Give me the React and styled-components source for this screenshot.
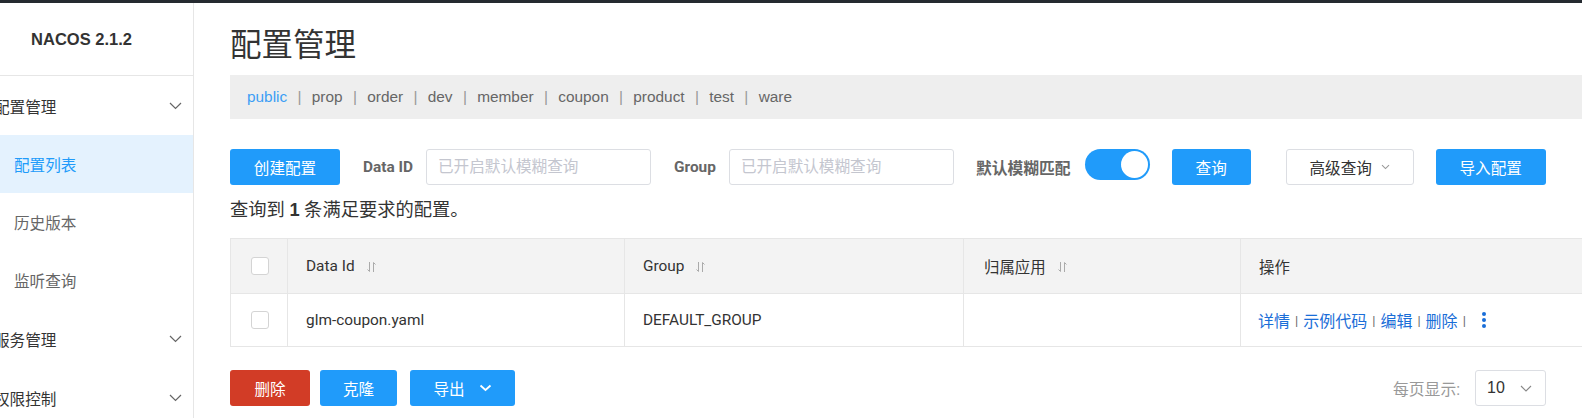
import styled, { createGlobalStyle } from "styled-components";

const GlobalStyle = createGlobalStyle`
  html, body {
    margin: 0;
    padding: 0;
    width: 1582px;
    height: 418px;
    overflow: hidden;
    background: #fff;
  }
  body {
    font-family: Roboto, "Noto Sans CJK SC", "Liberation Sans", sans-serif;
    font-size: 15.4px;
    color: #333;
  }
  * { box-sizing: border-box; }
`;

const BLUE = "#209bfa";

export default function App() {
  const namespaces = ["public", "prop", "order", "dev", "member", "coupon", "product", "test", "ware"];
  return (
    <>
      <GlobalStyle />
      <TopBar />
      <Layout>
        <Sidebar>
          <SideInner>
            <Brand>NACOS 2.1.2</Brand>
            <MenuHead>
              配置管理
              <Chevron />
            </MenuHead>
            <MenuItem $active>配置列表</MenuItem>
            <MenuItem>历史版本</MenuItem>
            <MenuItem>监听查询</MenuItem>
            <MenuHead>
              服务管理
              <Chevron />
            </MenuHead>
            <MenuHead>
              权限控制
              <Chevron />
            </MenuHead>
          </SideInner>
        </Sidebar>

        <Main>
          <Title>配置管理</Title>
          <NamespaceBar>
            {namespaces.map((ns, i) => (
              <span key={ns}>
                {i > 0 && <Sep>|</Sep>}
                <Ns $active={i === 0}>{ns}</Ns>
              </span>
            ))}
          </NamespaceBar>

          <Toolbar>
            <Button $w={110}>创建配置</Button>
            <Label $ml={23}>Data ID</Label>
            <Input $ml={13} placeholder="已开启默认模糊查询" />
            <Label $ml={23}>Group</Label>
            <Input $ml={13} placeholder="已开启默认模糊查询" />
            <Label $ml={22} $size={15.8}>默认模糊匹配</Label>
            <Toggle>
              <Knob />
            </Toggle>
            <Button $w={79} $ml={22}>查询</Button>
            <GhostButton>
              高级查询
              <svg width="9" height="6" viewBox="0 0 9 6">
                <path d="M1 1.2 L4.5 4.6 L8 1.2" fill="none" stroke="#999" strokeWidth="1.1" />
              </svg>
            </GhostButton>
            <Button $w={110} $ml={22}>导入配置</Button>
          </Toolbar>

          <Summary>
            查询到 <b>1</b> 条满足要求的配置。
          </Summary>

          <Table>
            <HeadRow>
              <Cell $w={57} $center>
                <Check />
              </Cell>
              <Cell $w={337}>
                Data Id <SortIcon />
              </Cell>
              <Cell $w={339}>
                Group <SortIcon />
              </Cell>
              <Cell $w={277} $pl={20}>
                归属应用 <SortIcon />
              </Cell>
              <Cell $w={420} $last>
                操作
              </Cell>
            </HeadRow>
            <BodyRow>
              <Cell $w={57} $center>
                <Check />
              </Cell>
              <Cell $w={337}>glm-coupon.yaml</Cell>
              <Cell $w={339}>DEFAULT_GROUP</Cell>
              <Cell $w={277} />
              <Cell $w={420} $last $pl={17}>
                <Actions>
                  <a>详情</a>
                  <ActSep>|</ActSep>
                  <a>示例代码</a>
                  <ActSep>|</ActSep>
                  <a>编辑</a>
                  <ActSep>|</ActSep>
                  <a>删除</a>
                  <ActSep>|</ActSep>
                  <More>
                    <svg width="6" height="18" viewBox="0 0 6 18">
                      <circle cx="3" cy="3" r="2" fill="#1a6ed8" />
                      <circle cx="3" cy="9" r="2" fill="#1a6ed8" />
                      <circle cx="3" cy="15" r="2" fill="#1a6ed8" />
                    </svg>
                  </More>
                </Actions>
              </Cell>
            </BodyRow>
          </Table>

          <Footer>
            <ButtonGroup>
              <Button $w={80} $bg="#d23c26">删除</Button>
              <Button $w={77} $ml={10}>克隆</Button>
              <Button $w={105} $ml={13}>
                导出
                <svg width="13" height="8" viewBox="0 0 13 8" style={{ marginLeft: 14 }}>
                  <path d="M1.5 1.5 L6.5 6 L11.5 1.5" fill="none" stroke="#fff" strokeWidth="1.8" />
                </svg>
              </Button>
            </ButtonGroup>
            <PageSize>
              每页显示:
              <Select>
                10
                <svg width="12" height="7" viewBox="0 0 12 7">
                  <path d="M1 1 L6 6 L11 1" fill="none" stroke="#888" strokeWidth="1.1" />
                </svg>
              </Select>
            </PageSize>
          </Footer>
        </Main>
      </Layout>
    </>
  );
}

function Chevron() {
  return (
    <ChevronWrap>
      <svg width="13" height="8" viewBox="0 0 13 8">
        <path d="M1 1 L6.5 6.5 L12 1" fill="none" stroke="#666" strokeWidth="1.2" />
      </svg>
    </ChevronWrap>
  );
}

function SortIcon() {
  return (
    <SortWrap>
      <svg width="9" height="12" viewBox="0 0 9 12">
        <path d="M2.5 1 V10.5 L0.5 8.5" fill="none" stroke="#aaa" strokeWidth="1" />
        <path d="M6.5 11 V1.5 L8.5 3.5" fill="none" stroke="#aaa" strokeWidth="1" />
      </svg>
    </SortWrap>
  );
}

const TopBar = styled.div`
  height: 3px;
  background: #252a30;
`;

const Layout = styled.div`
  display: flex;
  height: 415px;
`;

const Sidebar = styled.aside`
  width: 194px;
  flex-shrink: 0;
  border-right: 1px solid #e6e6e6;
  overflow: hidden;
`;

const SideInner = styled.div`
  width: 223px;
  margin-left: -30px;
`;

const Brand = styled.div`
  height: 73px;
  display: flex;
  align-items: center;
  justify-content: center;
  font-family: "Liberation Sans", Arial, sans-serif;
  font-weight: bold;
  font-size: 16.5px;
  color: #333;
  border-bottom: 1px solid #e6e6e6;
`;

const MenuHead = styled.div`
  height: 59px;
  display: flex;
  align-items: center;
  justify-content: space-between;
  padding: 0 11px 0 24px;
  font-size: 15.6px;
  color: #333;
`;

const ChevronWrap = styled.span`
  display: flex;
  align-items: center;
`;

const MenuItem = styled.div`
  height: 58px;
  display: flex;
  align-items: center;
  padding-left: 44px;
  font-size: 15.6px;
  color: ${(p) => (p.$active ? BLUE : "#666")};
  background: ${(p) => (p.$active ? "#e4f2fe" : "transparent")};
`;

const Main = styled.main`
  flex: 1;
  padding-left: 36px;
  overflow: hidden;
`;

const Title = styled.h1`
  margin: 23px 0 9px;
  font-size: 31.5px;
  line-height: 40px;
  font-weight: normal;
  color: #333;
`;

const NamespaceBar = styled.div`
  width: 1400px;
  height: 44px;
  background: #eeeeee;
  display: flex;
  align-items: center;
  padding-left: 17px;
  font-size: 15.4px;
  font-family: "Liberation Sans", Arial, sans-serif;
`;

const Ns = styled.span`
  color: ${(p) => (p.$active ? "#3d9ef5" : "#666")};
`;

const Sep = styled.span`
  color: #999;
  margin: 0 10.3px;
`;

const Toolbar = styled.div`
  display: flex;
  align-items: center;
  margin-top: 30px;
  height: 36px;
`;

const Button = styled.button`
  width: ${(p) => p.$w}px;
  height: 36px;
  margin-left: ${(p) => p.$ml || 0}px;
  flex-shrink: 0;
  border: none;
  border-radius: 3px;
  background: ${(p) => p.$bg || BLUE};
  color: #fff;
  font-family: inherit;
  font-size: 15.6px;
  display: inline-flex;
  align-items: center;
  justify-content: center;
  padding: 0;
`;

const GhostButton = styled.button`
  width: 128px;
  height: 36px;
  margin-left: 35px;
  flex-shrink: 0;
  border: 1px solid #dcdee3;
  border-radius: 3px;
  background: #fff;
  color: #333;
  font-family: inherit;
  font-size: 15.6px;
  display: inline-flex;
  align-items: center;
  justify-content: center;
  gap: 9px;
  padding: 0;
`;

const Label = styled.span`
  margin-left: ${(p) => p.$ml || 0}px;
  font-weight: bold;
  color: #666;
  font-size: ${(p) => p.$size || 15.4}px;
  white-space: nowrap;
`;

const Input = styled.input`
  width: 225px;
  height: 36px;
  margin-left: ${(p) => p.$ml || 0}px;
  flex-shrink: 0;
  border: 1px solid #dcdee3;
  border-radius: 3px;
  padding: 0 11px;
  font-family: inherit;
  font-size: 15.6px;
  outline: none;
  &::placeholder {
    color: #c4c6cf;
  }
`;

const Toggle = styled.div`
  width: 65px;
  height: 31px;
  margin-left: 14px;
  margin-bottom: 5px;
  flex-shrink: 0;
  border-radius: 16px;
  background: ${BLUE};
  display: flex;
  align-items: center;
  justify-content: flex-end;
  padding-right: 2px;
`;

const Knob = styled.div`
  width: 27px;
  height: 27px;
  border-radius: 50%;
  background: #fff;
`;

const Summary = styled.div`
  margin-top: 13px;
  font-size: 18.3px;
  line-height: 24px;
  color: #333;
  b {
    font-family: "Liberation Sans", Arial, sans-serif;
  }
`;

const Table = styled.div`
  margin-top: 16px;
  width: 1430px;
  border-top: 1px solid #e6e6e6;
  border-left: 1px solid #e6e6e6;
`;

const HeadRow = styled.div`
  display: flex;
  height: 55px;
  background: #f3f3f3;
  border-bottom: 1px solid #e6e6e6;
`;

const BodyRow = styled.div`
  display: flex;
  height: 53px;
  background: #fff;
  border-bottom: 1px solid #e6e6e6;
`;

const Cell = styled.div`
  width: ${(p) => p.$w}px;
  flex-shrink: 0;
  display: flex;
  align-items: center;
  justify-content: ${(p) => (p.$center ? "center" : "flex-start")};
  padding-left: ${(p) => (p.$center ? 0 : p.$pl || 18)}px;
  border-right: ${(p) => (p.$last ? "none" : "1px solid #e6e6e6")};
  font-size: 15.4px;
  color: #333;
  white-space: nowrap;
`;

const Check = styled.span`
  width: 18px;
  height: 18px;
  border: 1px solid #d4d4d4;
  border-radius: 3px;
  background: #fff;
  margin-left: 2px;
`;

const SortWrap = styled.span`
  display: inline-flex;
  margin-left: 12px;
  margin-top: 2px;
`;

const Actions = styled.div`
  display: flex;
  align-items: center;
  color: #1a6ed8;
  font-size: 16px;
  a {
    color: #1a6ed8;
  }
`;

const ActSep = styled.span`
  color: #666;
  margin: 0 5px;
  font-size: 13px;
`;

const More = styled.span`
  display: inline-flex;
  margin-left: 10px;
`;

const Footer = styled.div`
  width: 1316px;
  margin-top: 23px;
  display: flex;
  align-items: center;
  justify-content: space-between;
`;

const ButtonGroup = styled.div`
  display: flex;
  align-items: center;
`;

const PageSize = styled.div`
  display: flex;
  align-items: center;
  gap: 15px;
  color: #999;
  font-size: 15.8px;
`;

const Select = styled.div`
  width: 71px;
  height: 36px;
  border: 1px solid #dcdee3;
  border-radius: 3px;
  display: flex;
  align-items: center;
  justify-content: space-between;
  padding: 0 13px 0 11px;
  color: #333;
  font-size: 16px;
  font-family: "Liberation Sans", Arial, sans-serif;
`;
